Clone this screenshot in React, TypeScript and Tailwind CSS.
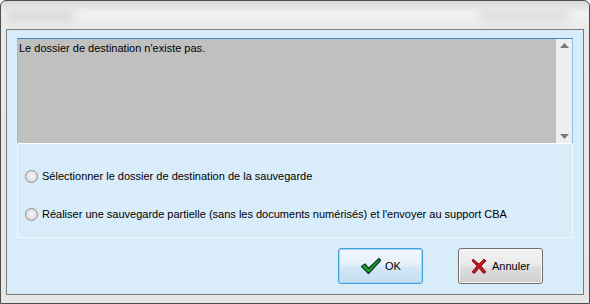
import React from 'react';

const font = { fontFamily: '"Liberation Sans", Arial, sans-serif' };

const Radio: React.FC<{ label: string }> = ({ label }) => (
  <label className="flex items-center gap-[4px] text-[11px] text-black h-[14px]">
    <span className="w-[13px] h-[13px] rounded-full border border-[#8e8f8f] bg-[radial-gradient(circle_at_50%_45%,#f4f4f4_0%,#e3e3e3_55%,#cfcfcf_100%)] shrink-0" />
    <span>{label}</span>
  </label>
);

const CheckIcon = () => (
  <svg width="22" height="18" viewBox="0 0 22 18">
    <path d="M1.5 9.5 L5 7 L8.5 11.5 L19 1.5 L20.5 3.5 L8.5 16.5 Z" fill="#1fa51f" stroke="#0b3d2a" strokeWidth="1.3" strokeLinejoin="round" />
  </svg>
);

const CrossIcon = () => (
  <svg width="16" height="16" viewBox="0 0 16 16">
    <path d="M2 1 L8 6 L13 1 L15 3 L10 8 L15 14 L12.5 15.5 L8 10 L3.5 15.5 L1 14 L6 8 L1 3 Z" fill="#c0161b" stroke="#7a0a0c" strokeWidth="0.8" strokeLinejoin="round" />
  </svg>
);

export default function App() {
  return (
    <div style={font} className="w-[590px] h-[304px] bg-white">
      <div className="w-[590px] h-[304px] flex flex-col border border-[#4d4d4d] rounded-t-[6px] bg-[linear-gradient(180deg,#d9d9d9_0px,#f1f1f1_12px,#e9e9e9_28px,#e6e6e6_100%)] overflow-hidden">
        {/* title bar */}
        <div className="h-[28px] shrink-0 relative">
          <div className="absolute left-[4px] top-[10px] w-[70px] h-[10px] rounded-full bg-[#d7d7d7] blur-[4px]" />
          <div className="absolute right-[20px] top-[10px] w-[90px] h-[10px] rounded-full bg-[#dadada] blur-[5px]" />
        </div>
        {/* client area */}
        <div className="mx-[5px] h-[266px] border border-[#7c7c7c] bg-[#d9ecfa] flex flex-col pt-[8px] px-[10px]">
          {/* message panel */}
          <div className="h-[106px] border-t border-[#3f86c6] border-x border-x-[#8cc0e8] border-b border-b-white flex">
            <div className="flex-1 bg-[#c0c0c0] text-[11px] text-black pl-[1px] pt-[2px] leading-[14px]">
              Le dossier de destination n'existe pas.
            </div>
            <div className="w-[16px] bg-[#efefef] flex flex-col justify-between items-center py-[4px]">
              <svg width="9" height="5" viewBox="0 0 9 5"><path d="M0 5 L4.5 0 L9 5 Z" fill="#7a7a7a" /></svg>
              <svg width="9" height="5" viewBox="0 0 9 5"><path d="M0 0 L4.5 5 L9 0 Z" fill="#7a7a7a" /></svg>
            </div>
          </div>
          {/* options panel */}
          <div className="h-[94px] border-x border-b border-[#f4f9fd] flex flex-col pl-[7px] pt-[25px] gap-[24px]">
            <Radio label="Sélectionner le dossier de destination de la sauvegarde" />
            <Radio label="Réaliser une sauvegarde partielle (sans les documents numérisés) et l'envoyer au support CBA" />
          </div>
          {/* buttons */}
          <div className="flex justify-end gap-[35px] mt-[10px] pr-[30px]">
            <button className="w-[85px] h-[36px] rounded-[3px] border border-[#3c9fdc] bg-[linear-gradient(180deg,#f2f8fd_0%,#e6f1fa_45%,#d3e7f6_55%,#c4dff3_100%)] shadow-[inset_0_0_0_1px_#a8d6f5] flex items-center justify-center gap-[3px] text-[11px] text-black">
              <CheckIcon />
              <span>OK</span>
            </button>
            <button className="w-[85px] h-[36px] rounded-[3px] border border-[#707070] bg-[linear-gradient(180deg,#f2f2f2_0%,#ebebeb_45%,#dddddd_55%,#cfcfcf_100%)] shadow-[inset_0_0_0_1px_#fafafa] flex items-center justify-center gap-[5px] text-[11px] text-black">
              <CrossIcon />
              <span>Annuler</span>
            </button>
          </div>
        </div>
      </div>
    </div>
  );
}
